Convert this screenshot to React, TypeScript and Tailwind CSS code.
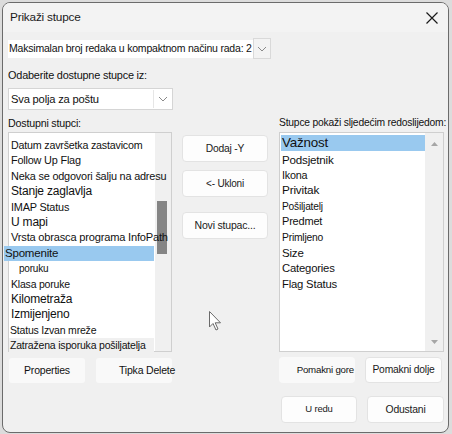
import React from "react";

const F = { fontFamily: '"Liberation Sans", Arial, sans-serif' } as React.CSSProperties;

function Chevron() {
  return (
    <svg width="10" height="6" viewBox="0 0 10 6">
      <path d="M1 1 L5 5 L9 1" fill="none" stroke="#8a8a8a" strokeWidth="1" />
    </svg>
  );
}

const leftItems: { t: string; c: string }[] = [
  { t: "Datum završetka zastavicom", c: "text-[10.7px] pl-[2px]" },
  { t: "Follow Up Flag", c: "text-[10.9px] pl-[2px]" },
  { t: "Neka se odgovori šalju na adresu", c: "text-[10.9px] pl-[2px]" },
  { t: "Stanje zaglavlja", c: "text-[12px] pl-[2px]" },
  { t: "IMAP Status", c: "text-[10.9px] pl-[2px]" },
  { t: "U mapi", c: "text-[12px] pl-[2px]" },
  { t: "Vrsta obrasca programa InfoPath", c: "text-[11.1px] pl-[2px]" },
];
const leftItems2: { t: string; c: string }[] = [
  { t: "poruku", c: "text-[10px] pl-[10px]" },
  { t: "Klasa poruke", c: "text-[10.5px] pl-[2px]" },
  { t: "Kilometraža", c: "text-[12px] pl-[2px]" },
  { t: "Izmijenjeno", c: "text-[12px] pl-[2px]" },
  { t: "Status Izvan mreže", c: "text-[10.5px] pl-[1px]" },
];

const rightItems: { t: string; c: string }[] = [
  { t: "Podsjetnik", c: "text-[11.6px]" },
  { t: "Ikona", c: "text-[10.8px]" },
  { t: "Privitak", c: "text-[11.8px]" },
  { t: "Pošiljatelj", c: "text-[10.2px]" },
  { t: "Predmet", c: "text-[11px]" },
  { t: "Primljeno", c: "text-[10.3px]" },
  { t: "Size", c: "text-[11.5px]" },
  { t: "Categories", c: "text-[11.3px]" },
  { t: "Flag Status", c: "text-[11.3px]" },
];

function Btn({ children, className = "" }: { children: React.ReactNode; className?: string }) {
  return (
    <div
      className={
        "flex items-center justify-center whitespace-nowrap rounded-[4px] border border-[#e3e3e3] bg-[#fdfdfd] text-[#1a1a1a] " +
        className
      }
    >
      {children}
    </div>
  );
}

export default function App() {
  return (
    <div
      className="relative h-[434px] w-[452px] bg-[#dcdcdc] p-[2px] pr-[3px] pb-[1px] tracking-[-0.2px]"
      style={F}
    >
      <div className="flex h-full flex-col overflow-hidden rounded-[8px] border border-[#6b6b6b] bg-[#f0f0f0] text-[#111]">
        {/* title bar */}
        <div className="flex h-[29px] shrink-0 items-center justify-between bg-[#f3f3f3] pl-[7px] pr-[9px]">
          <span className="text-[11.8px] text-[#1a1a1a]">Prikaži stupce</span>
          <svg width="14" height="14" viewBox="0 0 14 14">
            <path d="M1.5 1.5 L12.5 12.5 M12.5 1.5 L1.5 12.5" stroke="#1a1a1a" strokeWidth="1.2" />
          </svg>
        </div>

        <div className="flex flex-col pl-[5px] pr-[4px]">
          {/* max rows */}
          <div className="mt-[6px] flex h-[21px] items-center">
            <div className="flex h-[18px] items-center bg-white pl-[1px] pr-[1px] text-[10.5px] whitespace-nowrap">
              Maksimalan broj redaka u kompaktnom načinu rada: 2
            </div>
            <div className="flex h-[21px] w-[18px] items-center justify-center border border-[#d9d9d9] bg-[#f3f3f3]">
              <Chevron />
            </div>
          </div>

          <div className="mt-[8px] h-[16px] text-[10.9px] leading-[16px]">Odaberite dostupne stupce iz:</div>

          <div className="mt-[5px] flex h-[22px] w-[165px] items-center justify-between border border-[#d5d5d5] bg-white pl-[2px] pr-[4px]">
            <span className="text-[11.2px]">Sva polja za poštu</span>
            <div className="flex h-[18px] items-center border-l border-[#e6e6e6] pl-[4px]">
              <Chevron />
            </div>
          </div>

          {/* three columns */}
          <div className="mt-[6px] flex">
            {/* left */}
            <div className="flex w-[164px] flex-col">
              <div className="h-[14px] text-[10.7px] leading-[14px]">Dostupni stupci:</div>
              <div className="relative mt-[2px] h-[220px] border border-[#cfcfcf] bg-white">
                {/* scrollbar (drawn beneath the overflowing text) */}
                <div className="absolute top-0 right-0 bottom-0 w-[16px] bg-[#f0f0f0] pl-[2px] pt-[68px]">
                  <div className="h-[53px] w-[10px] bg-[#858585]" />
                </div>
                <div className="relative flex w-[145px] flex-col pt-[5px]">
                  {leftItems.map((it) => (
                    <div key={it.t} className={"h-[15.4px] leading-[15.4px] whitespace-nowrap " + it.c}>
                      {it.t}
                    </div>
                  ))}
                  <div className="-ml-[5px] h-[15.4px] w-[150px] bg-[#99c9ef] pl-[1px] text-[11.5px] leading-[15.4px]">
                    Spomenite
                  </div>
                  {leftItems2.map((it) => (
                    <div key={it.t} className={"h-[15.4px] leading-[15.4px] whitespace-nowrap " + it.c}>
                      {it.t}
                    </div>
                  ))}
                  <div className="h-[15.4px] bg-[#f0f0f0] pl-[1px] text-[10.5px] leading-[15.4px] whitespace-nowrap">
                    Zatražena isporuka pošiljatelja
                  </div>
                </div>
              </div>
            </div>

            {/* middle */}
            <div className="ml-[10px] flex w-[86px] flex-col pt-[19px]">
              <Btn className="h-[27px] text-[10.3px]">Dodaj -Y</Btn>
              <Btn className="mt-[8px] h-[27px] border-[#4d9ae0] text-[10px]">&lt;- Ukloni</Btn>
              <Btn className="mt-[15px] h-[27px] text-[10.5px]">Novi stupac...</Btn>
            </div>

            {/* right */}
            <div className="ml-[11px] flex w-[165px] flex-col">
              <div className="h-[14px] text-[10.3px] leading-[14px] whitespace-nowrap">
                Stupce pokaži sljedećim redoslijedom:
              </div>
              <div className="mt-[2px] flex h-[220px] border border-[#cfcfcf] bg-white">
                <div className="flex flex-1 flex-col pt-[2px] pl-[1px]">
                  <div className="h-[16px] w-[144px] bg-[#99c9ef] pl-[1px] text-[13.4px] leading-[16px]">Važnost</div>
                  <div className="flex flex-col pt-[1px]">
                    {rightItems.map((it) => (
                      <div key={it.t} className={"h-[15.6px] pl-[1px] leading-[15.6px] " + it.c}>
                        {it.t}
                      </div>
                    ))}
                  </div>
                </div>
                <div className="flex w-[18px] shrink-0 flex-col items-center justify-between bg-[#f0f0f0] pt-[9px] pb-[7px]">
                  <svg width="7" height="4" viewBox="0 0 7 4">
                    <path d="M0 4 L3.5 0 L7 4 Z" fill="#a6a6a6" />
                  </svg>
                  <svg width="7" height="4" viewBox="0 0 7 4">
                    <path d="M0 0 L3.5 4 L7 0 Z" fill="#a6a6a6" />
                  </svg>
                </div>
              </div>
            </div>
          </div>

          {/* bottom rows */}
          <div className="mt-[6px] flex">
            <div className="ml-[1px] flex h-[25px] w-[76px] items-center justify-center rounded-[3px] bg-[#f9f9f9] text-[10.5px]">
              Properties
            </div>
            <div className="ml-[11px] flex h-[25px] w-[76px] items-center whitespace-nowrap rounded-[3px] bg-[#f9f9f9] pl-[23px] text-[10.5px]">
              Tipka Delete
            </div>
            <div className="-mt-[1px] ml-[107px] flex h-[26px] w-[76px] items-center justify-end whitespace-nowrap rounded-[4px] bg-[#f9f9f9] pr-[1px] text-[9.7px]">
              Pomakni gore
            </div>
            <Btn className="-mt-[1px] ml-[10px] h-[26px] w-[77px] text-[10.3px]">Pomakni dolje</Btn>
          </div>
          <div className="mt-[13px] flex justify-end">
            <Btn className="h-[27px] w-[76px] text-[9.5px]">U redu</Btn>
            <Btn className="ml-[10px] h-[27px] w-[77px] text-[10.4px]">Odustani</Btn>
          </div>
        </div>
      </div>

      {/* mouse cursor */}
      <svg className="absolute left-[209px] top-[311px]" width="14" height="21" viewBox="0 0 14 21">
        <path
          d="M0.5 0.5 L0.5 16 L4 12.5 L7 19 L9 18 L6.2 11.8 L11.5 11.8 Z"
          fill="#ffffff"
          stroke="#6a6a6a"
          strokeWidth="1"
        />
      </svg>
    </div>
  );
}
